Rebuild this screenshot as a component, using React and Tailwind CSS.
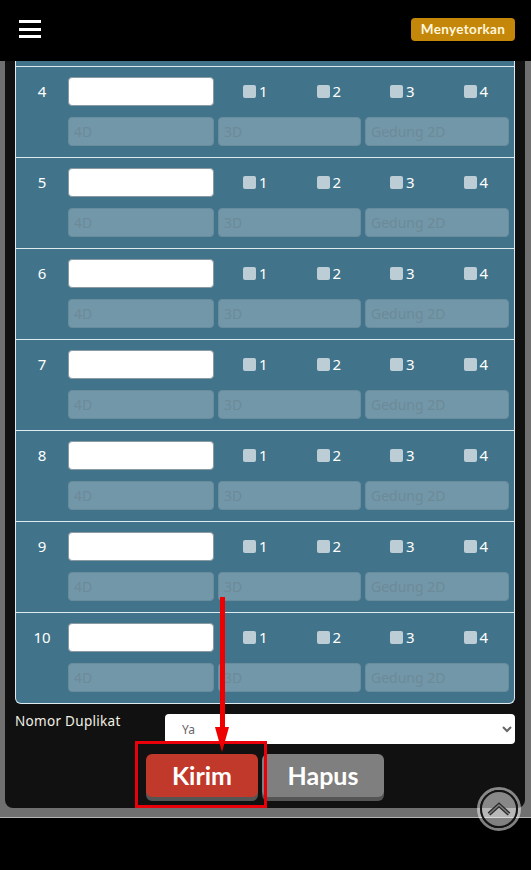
const ROWS = [4, 5, 6, 7, 8, 9, 10];
const BOXES = [1, 2, 3, 4];

const subInput = 'h-[29px] rounded-[4px] border border-[#6a8d9d] bg-[#7297a8] px-[5px] text-[14px] placeholder:text-[#6d8a98]';

const Row = ({ no }) => (
  <div className="flex h-[91px] border-t border-[#dfeaf0] pt-[10px]">
    <div className="flex h-[29px] w-[52px] shrink-0 items-center justify-center text-[15px] text-white">{no}</div>
    <div className="flex flex-col gap-[11px]">
      <div className="flex h-[29px] items-center">
        <input className="h-[29px] w-[146px] rounded-[4px] border border-[#8a9aa2] bg-white" />
        <div className="ml-[29px] flex">
          {BOXES.map(b => (
            <label key={b} className="flex w-[73.5px] items-center gap-[3px] text-[15px] text-white">
              <input type="checkbox" disabled className="size-[13px] appearance-none rounded-[2px] bg-[#bccdd5]" />
              {b}
            </label>
          ))}
        </div>
      </div>
      <div className="flex gap-[4px]">
        <input disabled placeholder="4D" className={`${subInput} w-[146px]`} />
        <input disabled placeholder="3D" className={`${subInput} w-[143px]`} />
        <input disabled placeholder="Gedung 2D" className={`${subInput} w-[144px]`} />
      </div>
    </div>
  </div>
);

const App = () => {
  return (
    <div className="relative h-[870px] overflow-hidden bg-black font-['Noto_Sans',sans-serif]">
      <header className="flex h-[61px] items-center justify-between bg-black pl-[19px] pr-[16px]">
        <div className="mb-[3px] flex w-[22px] flex-col gap-[4.5px]">
          <span className="h-[3px] bg-white" />
          <span className="h-[3px] bg-white" />
          <span className="h-[3px] bg-white" />
        </div>
        <button className="mb-[3px] h-[23px] w-[104px] rounded-[4px] bg-[#c4870a] font-['Lato',sans-serif] text-[13.5px] font-bold tracking-[0.35px] text-[#fff6dc]">
          Menyetorkan
        </button>
      </header>

      <main className="h-[757px] border-b border-[#b5b5b5] bg-[#707070] pl-[5px] pr-[6px]">
        <div className="h-[747px] rounded-b-[8px] bg-[#111111] px-[10px]">
          <div className="h-[5px] border-x border-[#dfeaf0] bg-[#41748a]" />
          <div className="rounded-b-[6px] border-x border-b border-[#dfeaf0] bg-[#41748a]">
            {ROWS.map(no => <Row key={no} no={no} />)}
          </div>

          <div className="mt-[10px] flex">
            <span className="-mt-[3px] w-[150px] text-[13.5px] tracking-[0.3px] text-[#f2f0e4]">Nomor Duplikat</span>
            <select className="h-[30px] w-[350px] rounded-[4px] bg-white pl-[13px] text-[12px] text-[#666666]">
              <option>Ya</option>
            </select>
          </div>

          <div className="mt-[10px] flex gap-[4px] pl-[131px]">
            <button className="h-[43px] w-[112px] rounded-[6px] bg-[#c0392b] font-['Lato',sans-serif] text-[25px] font-bold text-white shadow-[0_4px_0_#555555]">Kirim</button>
            <button className="h-[43px] w-[122px] rounded-[6px] bg-[#7f7f7f] font-['Lato',sans-serif] text-[25px] font-bold text-white shadow-[0_4px_0_#555555]">Hapus</button>
          </div>
        </div>
      </main>

      {/* annotation drawn over the page */}
      <div className="absolute left-[135px] top-[741px] h-[67px] w-[132px] border-[3px] border-[#e8000b]" />
      <svg className="absolute left-[208px] top-[597px]" width="28" height="156" viewBox="0 0 28 156">
        <rect x="12" y="0" width="5" height="132" fill="#ee0000" />
        <path d="M7 130 H21 L14 155 Z" fill="#ee0000" />
      </svg>

      {/* back to top */}
      <div className="absolute left-[477px] top-[787px] size-[44px] rounded-full border-[3px] border-white/50">
        <div className="flex size-full items-center justify-center rounded-full border-[2px] border-[#141414] bg-white/50">
          <svg width="24" height="14" viewBox="0 0 24 14" fill="none" strokeLinejoin="miter">
            <path d="M2 12 L12 3 L22 12" stroke="#2a2a2a" strokeWidth="4" />
            <path d="M2 12 L12 3 L22 12" stroke="#7d7d7d" strokeWidth="1.5" />
          </svg>
        </div>
      </div>
    </div>
  );
};

export default App;
